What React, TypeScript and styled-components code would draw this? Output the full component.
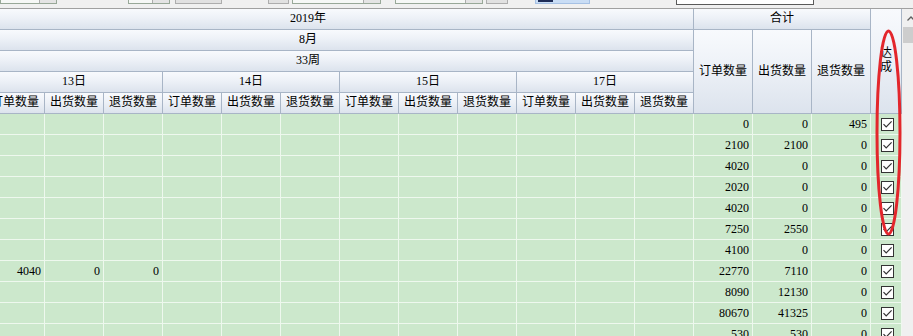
import React from "react";
import styled, { createGlobalStyle } from "styled-components";

const GlobalStyle = createGlobalStyle`
  html, body {
    margin: 0;
    padding: 0;
    overflow: hidden;
    background: #f0f0f0;
  }
  body {
    font-family: "Liberation Serif", "Noto Sans CJK SC", serif;
    font-size: 12px;
    color: #000;
  }
  * { box-sizing: border-box; }
`;

const COLUMNS = "repeat(15, 59px) 31px";

const Page = styled.div`
  position: relative;
  width: 913px;
  height: 336px;
  overflow: hidden;
  background: #f0f0f0;
`;

/* ---------- toolbar (only its bottom edge is visible) ---------- */

const Toolbar = styled.div`
  height: 9px;
  display: flex;
  align-items: flex-end;
  overflow: hidden;
  padding-bottom: 4px;
  border-bottom: 1px solid #a0a0a0;
`;

const Combo = styled.div<{ $w: number; $gap: number }>`
  flex: none;
  display: flex;
  justify-content: flex-end;
  width: ${(p) => p.$w}px;
  height: 20px;
  margin-left: ${(p) => p.$gap}px;
  background: #f6f8f6;
  border: 1px solid #98a898;
`;

const DropButton = styled.div`
  width: 17px;
  height: 100%;
  background: #e4e4e4;
  border-left: 1px solid #acacac;
`;

const ToolButton = styled.div<{ $w: number; $gap: number }>`
  flex: none;
  width: ${(p) => p.$w}px;
  height: 20px;
  margin-left: ${(p) => p.$gap}px;
  background: #e1e1e1;
  border: 1px solid #adadad;
`;

const ToggleButton = styled.div<{ $w: number; $gap: number }>`
  flex: none;
  display: flex;
  align-items: flex-end;
  padding: 0 0 1px 2px;
  width: ${(p) => p.$w}px;
  height: 20px;
  margin-left: ${(p) => p.$gap}px;
  background: #c9ddf5;
  border: 1px solid #a6c1e4;
`;

const ToggleMark = styled.div`
  width: 15px;
  height: 2px;
  background: #1e2d58;
`;

const SearchBox = styled.div<{ $w: number; $gap: number }>`
  flex: none;
  width: ${(p) => p.$w}px;
  height: 20px;
  margin-left: ${(p) => p.$gap}px;
  margin-bottom: -1px;
  background: #ffffff;
  border: 1px solid #5a5a5a;
`;

/* ---------- grid ---------- */

const GridArea = styled.div`
  display: flex;
  height: 327px;
`;

const Viewport = styled.div`
  flex: none;
  width: 902px;
  overflow: hidden;
`;

const Sheet = styled.div`
  width: 916px;
  margin-left: -14px;
`;

const HeaderGrid = styled.div`
  display: grid;
  grid-template-columns: ${COLUMNS};
  grid-template-rows: repeat(5, 21px);
`;

const HeadCell = styled.div<{ $col: string; $row: string }>`
  grid-column: ${(p) => p.$col};
  grid-row: ${(p) => p.$row};
  display: flex;
  flex-direction: column;
  align-items: center;
  justify-content: center;
  padding-bottom: 2px;
  overflow: hidden;
  white-space: nowrap;
  font-size: 12px;
  line-height: 14px;
  background: linear-gradient(to bottom, #f8fafd 0%, #edf1f7 45%, #dce3ed 100%);
  border-right: 1px solid #a8b5c6;
  border-bottom: 1px solid #a8b5c6;
`;

const SpanTitle = styled(HeadCell)`
  padding-right: 63px;
`;

const BodyGrid = styled.div`
  display: grid;
  grid-template-columns: ${COLUMNS};
  grid-auto-rows: 21px;
  background: #cce8cc;
`;

const Cell = styled.div`
  padding-right: 3px;
  text-align: right;
  line-height: 20px;
  font-size: 12px;
  white-space: nowrap;
  overflow: hidden;
  border-right: 1px solid #eef8ee;
  border-bottom: 1px solid #eef8ee;
`;

const CheckCell = styled.div`
  display: flex;
  align-items: center;
  justify-content: center;
  padding-left: 2px;
  border-right: 1px solid #eef8ee;
  border-bottom: 1px solid #eef8ee;
`;

const CheckBox = styled.div`
  width: 13px;
  height: 13px;
  background: #ffffff;
  border: 1px solid #333333;
  display: flex;
  align-items: center;
  justify-content: center;
`;

/* ---------- scrollbar ---------- */

const VScroll = styled.div`
  flex: none;
  width: 17px;
  background: #f0f0f0;
  display: flex;
  flex-direction: column;
`;

const ScrollArrow = styled.div`
  height: 18px;
  display: flex;
  align-items: center;
  justify-content: center;
`;

const ScrollThumb = styled.div`
  height: 16px;
  margin-left: 1px;
  background: #cdcdcd;
`;

/* ---------- annotation ---------- */

const Annotation = styled.svg`
  position: absolute;
  left: 873px;
  top: 27px;
  width: 31px;
  height: 212px;
  pointer-events: none;
`;

type Row = { t: number[]; d13?: number[] };

const rows: Row[] = [
  { t: [0, 0, 495] },
  { t: [2100, 2100, 0] },
  { t: [4020, 0, 0] },
  { t: [2020, 0, 0] },
  { t: [4020, 0, 0] },
  { t: [7250, 2550, 0] },
  { t: [4100, 0, 0] },
  { d13: [4040, 0, 0], t: [22770, 7110, 0] },
  { t: [8090, 12130, 0] },
  { t: [80670, 41325, 0] },
  { t: [530, 530, 0] },
];

const days = ["13日", "14日", "15日", "17日"];
const measures = ["订单数量", "出货数量", "退货数量"];

const Check = () => (
  <CheckBox>
    <svg width="11" height="11" viewBox="0 0 11 11">
      <path d="M1.5 5.2 L4.2 8 L9.6 2.4" fill="none" stroke="#333" strokeWidth="1.2" />
    </svg>
  </CheckBox>
);

export default function App() {
  return (
    <Page>
      <GlobalStyle />
      <Toolbar>
        <Combo $w={57} $gap={0}>
          <DropButton />
        </Combo>
        <Combo $w={42} $gap={71}>
          <DropButton />
        </Combo>
        <ToolButton $w={47} $gap={5} />
        <ToolButton $w={21} $gap={46} />
        <Combo $w={89} $gap={3}>
          <DropButton />
        </Combo>
        <Combo $w={88} $gap={14}>
          <DropButton />
        </Combo>
        <ToolButton $w={22} $gap={3} />
        <ToggleButton $w={55} $gap={27}>
          <ToggleMark />
        </ToggleButton>
        <SearchBox $w={138} $gap={86} />
      </Toolbar>

      <GridArea>
        <Viewport>
          <Sheet>
            <HeaderGrid>
              <SpanTitle $col="1 / 13" $row="1">2019年</SpanTitle>
              <HeadCell $col="13 / 16" $row="1">合计</HeadCell>
              <HeadCell $col="16" $row="1 / 6">
                <span>达</span>
                <span>成</span>
              </HeadCell>
              <SpanTitle $col="1 / 13" $row="2">8月</SpanTitle>
              <SpanTitle $col="1 / 13" $row="3">33周</SpanTitle>
              {measures.map((m, i) => (
                <HeadCell key={m} $col={`${13 + i}`} $row="2 / 6">
                  {m}
                </HeadCell>
              ))}
              {days.map((d, i) => (
                <HeadCell key={d} $col={`${1 + i * 3} / ${4 + i * 3}`} $row="4">
                  {d}
                </HeadCell>
              ))}
              {days.map((d, i) =>
                measures.map((m, j) => (
                  <HeadCell key={d + m} $col={`${1 + i * 3 + j}`} $row="5">
                    {m}
                  </HeadCell>
                ))
              )}
            </HeaderGrid>

            <BodyGrid>
              {rows.map((r, ri) => (
                <React.Fragment key={ri}>
                  {Array.from({ length: 12 }).map((_, ci) => (
                    <Cell key={ci}>{r.d13 && ci < 3 ? r.d13[ci] : ""}</Cell>
                  ))}
                  {r.t.map((v, ci) => (
                    <Cell key={"t" + ci}>{v}</Cell>
                  ))}
                  <CheckCell>
                    <Check />
                  </CheckCell>
                </React.Fragment>
              ))}
            </BodyGrid>
          </Sheet>
        </Viewport>

        <VScroll>
          <ScrollArrow>
            <svg width="8" height="5" viewBox="0 0 8 5">
              <path d="M0.5 4.5 L4 1 L7.5 4.5" fill="none" stroke="#606060" strokeWidth="1.3" />
            </svg>
          </ScrollArrow>
          <ScrollThumb />
        </VScroll>
      </GridArea>

      <Annotation viewBox="0 0 31 212">
        <ellipse cx="15.5" cy="105.5" rx="11.5" ry="101.5" fill="none" stroke="#e3262c" strokeWidth="3" />
      </Annotation>
    </Page>
  );
}
